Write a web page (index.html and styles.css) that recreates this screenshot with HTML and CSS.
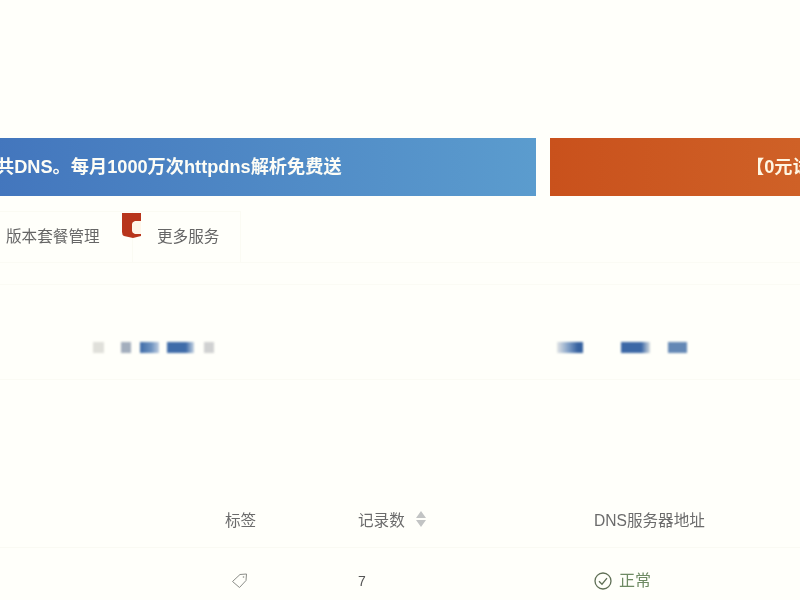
FILE: index.html
```html
<!DOCTYPE html>
<html lang="zh-CN">
<head>
<meta charset="utf-8">
<title>DNS</title>
<link rel="stylesheet" href="styles.css">
</head>
<body>
<main class="page">
  <section class="banners">
    <div class="banner banner-blue">共DNS。每月1000万次httpdns解析免费送</div>
    <div class="banner banner-orange">【0元试</div>
  </section>
  <nav class="tabs">
    <div class="tab tab-first">版本套餐管理
      <svg class="badge" viewBox="0 0 20 26" aria-hidden="true"><path d="M11 9H20V22H11Z" fill="#fff6ea"/><path d="M1 1H20V9H14Q11 10 11 12V19Q11 21 14 22H20V24L12 26L3 24Q1 23 1 20Z" fill="#b8351c"/></svg>
    </div>
    <div class="tab">更多服务</div>
  </nav>
  <section class="stats">
    <div class="blurs blurs-left">
      <i class="b b-g1"></i><i class="b b-g2"></i><i class="b b-blue"></i><i class="b b-blue2"></i><i class="b b-g3"></i>
    </div>
    <div class="blurs blurs-right">
      <i class="b b-r1"></i><i class="b b-r2"></i><i class="b b-r3"></i>
    </div>
  </section>
  <section class="table">
    <div class="cell head">标签</div>
    <div class="cell head">记录数
      <svg class="sort" viewBox="0 0 12 18" aria-hidden="true"><path d="M6 1l5 7H1zM6 17l5-7H1z" fill="#c2c4c4"/></svg>
    </div>
    <div class="cell head">DNS服务器地址</div>
    <div class="cell body">
      <svg class="tag" viewBox="0 0 18 18" aria-hidden="true"><path d="M1.500 9.500L9 2.500l6.500-.5-.5 6.500-6.500 7z" fill="none" stroke="#8b8d88" stroke-width="1"/><circle cx="12.500" cy="5" r=".8" fill="#8b8d88"/></svg>
    </div>
    <div class="cell body count">7</div>
    <div class="cell body status">
      <svg class="ok" viewBox="0 0 18 18" aria-hidden="true"><circle cx="9" cy="9" r="8" fill="none" stroke="#5f6f55" stroke-width="1.300"/><path d="M5 9.200l3 3 5-6" fill="none" stroke="#5f6f55" stroke-width="1.300"/></svg>
      <span class="ok-text">正常</span>
    </div>
  </section>
</main>
</body>
</html>
```
FILE: styles.css
```css
html, body {
  margin: 0;
  height: 100%;
  overflow: hidden;
}
.page {
  box-sizing: border-box;
  width: 800px;
  height: 600px;
  overflow: hidden;
  padding-top: 138px;
  background: #fffffa;
  color: #666;
  font-family: "Liberation Sans", "Noto Sans CJK SC", sans-serif;
  filter: blur(.3px);
}
.banners {
  display: flex;
  gap: 14px;
  height: 58px;
}
.banner {
  display: flex;
  align-items: center;
  flex: none;
  box-sizing: border-box;
  height: 58px;
  color: #fdfdf6;
  font-size: 18.2px;
  font-weight: 700;
  padding-bottom: 5px;
}
.banner-blue {
  width: 540px;
  margin-left: -4px;
  background: linear-gradient(90deg, #4376bd 0%, #5b9cce 100%);
}
.banner-orange {
  width: 250px;
  padding-left: 196px;
  white-space: nowrap;
  background: linear-gradient(90deg, #c9511c 0%, #cf6127 100%);
  color: #fff6e2;
}
.tabs {
  display: flex;
  margin-top: 15px;
  height: 51px;
  border-bottom: 1px solid #fbfbf4;
}
.tab {
  position: relative;
  display: flex;
  align-items: center;
  box-sizing: border-box;
  height: 51px;
  padding-left: 24px;
  width: 108px;
  font-size: 15.6px;
  color: #666;
  border: 1px solid #fbfbf3;
  border-width: 1px 1px 0 0;
  padding-bottom: 5px;
}
.tab-first {
  width: 133px;
  padding-left: 6px;
}
.badge {
  position: absolute;
  top: 0;
  left: 121px;
  width: 20px;
  height: 26px;
  z-index: 1;
}
.stats {
  box-sizing: border-box;
  height: 96px;
  margin-top: 21px;
  padding-top: 30px;
  border: solid #fbfbf4;
  border-width: 1px 0;
  display: flex;
  align-items: center;
}
.blurs {
  display: flex;
  align-items: center;
  height: 11px;
}
.blurs-left {
  margin-left: 93px;
  width: 330px;
}
.blurs-right {
  margin-left: 134px;
}
.b {
  display: block;
  height: 11px;
  flex: none;
  filter: blur(.8px);
}
.b-g1 { width: 11px; margin-right: 17px; background: #e0e0da; }
.b-g2 { width: 10px; margin-right: 9px; background: #a3aebd; }
.b-blue { width: 19px; margin-right: 8px; background: linear-gradient(90deg, #3e6ba8, #6f93c0 60%, #bfcde0); }
.b-blue2 { width: 27px; margin-right: 10px; background: linear-gradient(90deg, #3f6ca9 70%, #c7d4e2); }
.b-g3 { width: 10px; background: #d0d1d1; }
.b-r1 { width: 26px; margin-right: 38px; background: linear-gradient(90deg, #e2e5e6, #7e9dc5 45%, #36619f 80%); }
.b-r2 { width: 29px; margin-right: 18px; background: linear-gradient(90deg, #3c68a6 70%, #d7dde0); }
.b-r3 { width: 19px; background: #6488b5; }
.table {
  display: grid;
  grid-template-columns: 133px 236px 1fr;
  padding-left: 225px;
  margin-top: 115px;
  position: relative;
  font-size: 15.6px;
}
.cell {
  display: flex;
  align-items: center;
}
.head {
  box-sizing: border-box;
  height: 53px;
  padding-bottom: 5px;
  border-bottom: 1px solid #fafaf3;
  color: #6b6b6b;
}
.table::before {
  content: "";
  position: absolute;
  left: 0;
  width: 225px;
  top: 52px;
  border-top: 1px solid #fafaf3;
}
.body {
  height: 70px;
  align-items: flex-start;
  padding-top: 24px;
  box-sizing: border-box;
}
.sort {
  width: 12px;
  height: 18px;
  margin-left: 10px;
}
.tag {
  width: 18px;
  height: 18px;
  margin-left: 6px;
}
.count {
  color: #555;
  font-size: 14px;
  padding-top: 25px;
}
.ok {
  width: 18px;
  height: 18px;
}
.status {
  gap: 7px;
}
.ok-text {
  color: #6e8a63;
  font-size: 16px;
  line-height: 18px;
}
```
